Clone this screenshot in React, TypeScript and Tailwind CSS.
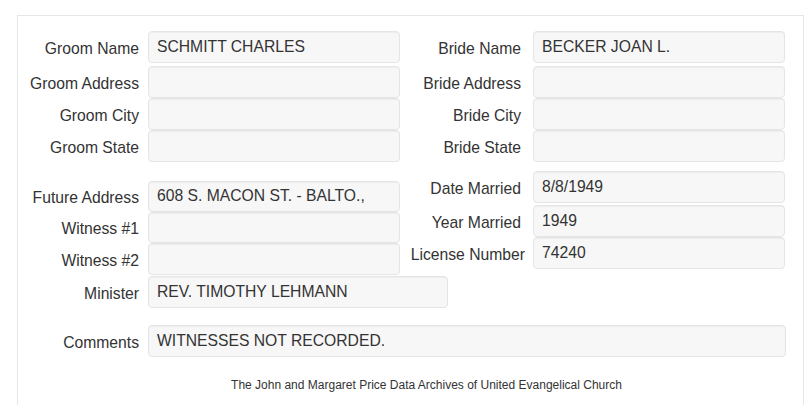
import React from "react";

interface FieldProps {
  label: string;
  value?: string;
  labelW?: string;
  gap?: string;
  boxW?: string;
  h?: string;
  className?: string;
}

function Field({
  label,
  value = "",
  labelW = "w-[121px]",
  gap = "gap-[9px]",
  boxW = "w-[252px]",
  h = "h-[32px]",
  className = "",
}: FieldProps) {
  return (
    <div className={`flex items-center ${gap} ${className}`}>
      <div className={`${labelW} shrink-0 text-right whitespace-nowrap pt-[3px]`}>{label}</div>
      <div
        className={`${boxW} ${h} shrink-0 flex items-center pl-[8px] pb-[1px] rounded-[4px] border border-[#e5e5e5] bg-[#f7f7f7] shadow-[inset_0_1px_1px_rgba(0,0,0,0.04)] whitespace-nowrap`}
      >
        {value}
      </div>
    </div>
  );
}

export default function App() {
  return (
    <div
      className="w-[805px] h-[405px] overflow-hidden bg-white text-[#333] text-[15.7px] leading-[20px]"
      style={{ fontFamily: '"Liberation Sans", Arial, sans-serif' }}
    >
      <div className="ml-[17px] mt-[15px] w-[787px] h-[400px] border border-b-0 border-[#e6e6e6] pt-[15px]">
        {/* names & addresses */}
        <div className="flex">
          <div className="w-[382px] flex flex-col">
            <Field label="Groom Name" value="SCHMITT CHARLES" className="mb-[3px]" />
            <Field label="Groom Address" />
            <Field label="Groom City" />
            <Field label="Groom State" />
          </div>
          <div className="flex flex-col">
            <Field label="Bride Name" value="BECKER JOAN L." gap="gap-[12px]" className="mb-[3px]" />
            <Field label="Bride Address" gap="gap-[12px]" />
            <Field label="Bride City" gap="gap-[12px]" />
            <Field label="Bride State" gap="gap-[12px]" />
          </div>
        </div>

        {/* marriage details */}
        <div className="flex mt-[9px]">
          <div className="w-[382px] flex flex-col pt-[10px]">
            <Field label="Future Address" value="608 S. MACON ST. - BALTO.," h="h-[31px]" />
            <Field label="Witness #1" h="h-[31px]" />
            <Field label="Witness #2" h="h-[32px]" />
          </div>
          <div className="flex flex-col">
            <Field label="Date Married" value="8/8/1949" gap="gap-[12px]" className="mb-[2px]" />
            <Field label="Year Married" value="1949" gap="gap-[12px]" />
            <Field label="License Number" value="74240" labelW="w-[125px]" gap="gap-[8px]" />
          </div>
        </div>

        <Field label="Minister" value="REV. TIMOTHY LEHMANN" boxW="w-[300px]" className="mt-[1px]" />

        <Field label="Comments" value="WITNESSES NOT RECORDED." boxW="w-[638px]" className="mt-[17px]" />

        <div className="mt-[20px] pl-[32px] text-center text-[12px] leading-[16px]">
          The John and Margaret Price Data Archives of United Evangelical Church
        </div>
      </div>
    </div>
  );
}
